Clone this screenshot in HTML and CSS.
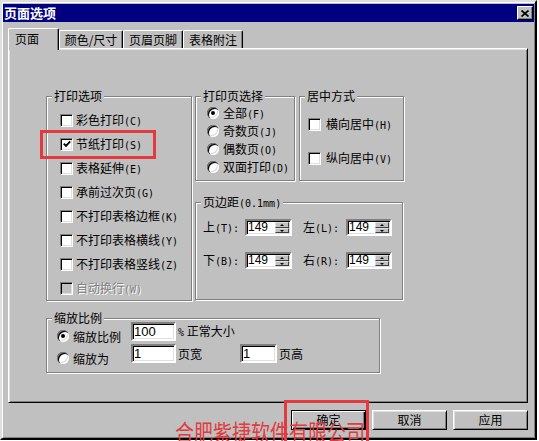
FILE: index.html
```html
<!DOCTYPE html>
<html lang="zh-CN">
<head>
<meta charset="utf-8">
<title>页面选项</title>
<link rel="stylesheet" href="styles.css">
</head>
<body>
<div class="window">
  <div class="titlebar">
    <span class="title">页面选项</span>
    <span class="close-btn"><svg width="8" height="7" viewBox="0 0 8 7"><path d="M0.5 0.5 L7.5 6.5 M7.5 0.5 L0.5 6.5"/></svg></span>
  </div>

  <div class="tabs">
    <div class="tab active">页面</div>
    <div class="tab w64">颜色/尺寸</div>
    <div class="tab w60">页眉页脚</div>
    <div class="tab w60">表格附注</div>
  </div>

  <div class="panel">
    <div class="top-row">
      <div class="group g-print">
        <span class="legend">打印选项</span>
        <div class="opt"><span class="cb"></span><span class="lbl">彩色打印<span class="acc">(C)</span></span></div>
        <div class="opt"><span class="cb"><svg width="8" height="8" viewBox="0 0 8 8"><path d="M0.8 3.6 L3 5.8 L7.2 1.4"/></svg></span><span class="lbl">节纸打印<span class="acc">(S)</span></span></div>
        <div class="opt"><span class="cb"></span><span class="lbl">表格延伸<span class="acc">(E)</span></span></div>
        <div class="opt"><span class="cb"></span><span class="lbl">承前过次页<span class="acc">(G)</span></span></div>
        <div class="opt"><span class="cb"></span><span class="lbl">不打印表格边框<span class="acc">(K)</span></span></div>
        <div class="opt"><span class="cb"></span><span class="lbl">不打印表格横线<span class="acc">(Y)</span></span></div>
        <div class="opt"><span class="cb"></span><span class="lbl">不打印表格竖线<span class="acc">(Z)</span></span></div>
        <div class="opt disabled"><span class="cb"></span><span class="lbl">自动换行<span class="acc">(W)</span></span></div>
      </div>

      <div class="right-col">
        <div class="right-top">
          <div class="group g-pages">
            <span class="legend">打印页选择</span>
            <div class="ropt"><span class="radio on"></span><span class="lbl">全部<span class="acc">(F)</span></span></div>
            <div class="ropt"><span class="radio"></span><span class="lbl">奇数页<span class="acc">(J)</span></span></div>
            <div class="ropt"><span class="radio"></span><span class="lbl">偶数页<span class="acc">(O)</span></span></div>
            <div class="ropt"><span class="radio"></span><span class="lbl">双面打印<span class="acc">(D)</span></span></div>
          </div>
          <div class="group g-center">
            <span class="legend">居中方式</span>
            <div class="copt"><span class="cb"></span><span class="lbl">横向居中<span class="acc">(H)</span></span></div>
            <div class="copt second"><span class="cb"></span><span class="lbl">纵向居中<span class="acc">(V)</span></span></div>
          </div>
        </div>

        <div class="group g-margin">
          <span class="legend">页边距<span class="acc">(0.1mm)</span></span>
          <div class="mrow">
            <span class="mlabel">上<span class="acc">(T):</span></span>
            <span class="field spin w47"><span class="val">149</span><span class="spinner"><span class="sb up"></span><span class="sb down"></span></span></span>
            <span class="mlabel second">左<span class="acc">(L):</span></span>
            <span class="field spin w46"><span class="val">149</span><span class="spinner"><span class="sb up"></span><span class="sb down"></span></span></span>
          </div>
          <div class="mrow row2">
            <span class="mlabel">下<span class="acc">(B):</span></span>
            <span class="field spin w47"><span class="val">149</span><span class="spinner"><span class="sb up"></span><span class="sb down"></span></span></span>
            <span class="mlabel second">右<span class="acc">(R):</span></span>
            <span class="field spin w46"><span class="val">149</span><span class="spinner"><span class="sb up"></span><span class="sb down"></span></span></span>
          </div>
        </div>
      </div>
    </div>

    <div class="group g-scale">
      <span class="legend">缩放比例</span>
      <div class="srow">
        <span class="rlabel"><span class="radio on"></span><span class="lbl">缩放比例</span></span>
        <span class="field sfield w45"><span class="val">100</span></span>
        <span class="after"><span class="acc">%</span> 正常大小</span>
      </div>
      <div class="srow row2">
        <span class="rlabel"><span class="radio"></span><span class="lbl">缩放为</span></span>
        <span class="field sfield w45"><span class="val">1</span></span>
        <span class="after wide">页宽</span>
        <span class="field sfield w37"><span class="val">1</span></span>
        <span class="after">页高</span>
      </div>
    </div>
  </div>

  <div class="buttons">
    <span class="btn default">确定</span>
    <span class="btn">取消</span>
    <span class="btn">应用</span>
  </div>

  <div class="mark mark-check"></div>
  <div class="mark mark-ok"></div>
  <div class="watermark">合肥紫捷软件有限公司</div>
</div>
</body>
</html>
```

FILE: styles.css
```css
* { box-sizing: border-box; }

html, body {
  margin: 0;
  padding: 0;
}

body {
  width: 539px;
  height: 441px;
  overflow: hidden;
  background: #ffffff;
  font-family: "Noto Sans CJK SC", "Noto Sans", sans-serif;
  font-size: 12px;
  color: #000;
}

.window {
  position: relative;
  width: 537px;
  height: 440px;
  background: #c0c0c0;
  border: 2px solid;
  border-color: #dfdfdf #000 #000 #dfdfdf;
  box-shadow: inset 1px 1px 0 #fff, inset -1px -1px 0 #808080;
  padding: 2px 1px 0 1px;
}

/* title bar */
.titlebar {
  height: 18px;
  background: #000080;
  display: flex;
  align-items: center;
  justify-content: space-between;
  padding-left: 1px;
}

.title {
  color: #fff;
  font-weight: bold;
  font-size: 13px;
  line-height: 16px;
}

.close-btn {
  width: 16px;
  height: 14px;
  margin-right: 1px;
  background: #c0c0c0;
  border: 1px solid;
  border-color: #fff #000 #000 #fff;
  box-shadow: inset -1px -1px 0 #808080;
  display: flex;
  align-items: center;
  justify-content: center;
}

.close-btn svg path {
  stroke: #000;
  stroke-width: 1.7;
  fill: none;
}

/* tabs */
.tabs {
  position: relative;
  z-index: 2;
  display: flex;
  align-items: flex-end;
  height: 20px;
  margin-top: 6px;
  padding-left: 5px;
}

.tab {
  height: 18px;
  border-top: 1px solid #fff;
  border-left: 1px solid #fff;
  border-right: 1px solid #000;
  box-shadow: inset -1px 0 0 #808080;
  border-radius: 2px 2px 0 0;
  background: #c0c0c0;
  line-height: 17px;
  text-align: center;
  white-space: nowrap;
}

.tab.active {
  width: 51px;
  height: 22px;
  margin-bottom: -2px;
  text-align: left;
  padding-left: 6px;
  padding-top: 1px;
}

.tab.w64 { width: 64px; }
.tab.w60 { width: 60px; }

/* panel */
.panel {
  margin-left: 5px;
  width: 520px;
  height: 355px;
  border: 1px solid;
  border-color: #fff #000 #000 #fff;
  box-shadow: inset 1px 1px 0 #dfdfdf, inset -1px -1px 0 #808080;
  padding: 47px 0 0 37px;
}

.top-row {
  display: flex;
  align-items: flex-start;
}

.right-col {
  margin-left: 3px;
  display: flex;
  flex-direction: column;
}

.right-top {
  display: flex;
  gap: 4px;
}

/* group boxes */
.group {
  position: relative;
  border: 1px solid #808080;
  box-shadow: inset 1px 1px 0 #fff, 1px 1px 0 #fff;
}

.legend {
  position: absolute;
  top: -7px;
  left: 5px;
  padding: 0 2px;
  background: #c0c0c0;
  line-height: 12px;
  white-space: nowrap;
}

.g-print {
  width: 146px;
  height: 205px;
  padding: 11px 0 0 13px;
}

.g-pages {
  width: 100px;
  height: 85px;
  padding: 7px 0 0 11px;
}

.g-center {
  width: 105px;
  height: 85px;
  padding: 15px 0 0 8px;
}

.g-margin {
  width: 208px;
  height: 98px;
  margin-top: 21px;
  padding: 16px 0 0 7px;
}

.g-scale {
  width: 334px;
  height: 55px;
  margin-top: 17px;
  padding: 3px 0 0 10px;
}

/* text bits */
.lbl {
  line-height: 13px;
  white-space: nowrap;
}

.acc {
  font-family: "DejaVu Sans Mono", "Liberation Mono", monospace;
  font-size: 10px;
}

/* checkboxes */
.opt {
  display: flex;
  align-items: center;
  gap: 3px;
  height: 24px;
}

.copt {
  display: flex;
  align-items: center;
  gap: 5px;
  height: 24px;
}

.copt.second { margin-top: 10px; }

.cb {
  flex: none;
  width: 13px;
  height: 13px;
  background: #fff;
  border: 1px solid;
  border-color: #808080 #fff #fff #808080;
  box-shadow: inset 1px 1px 0 #000, inset -1px -1px 0 #dfdfdf;
  display: flex;
  align-items: center;
  justify-content: center;
}

.cb svg path {
  stroke: #000;
  stroke-width: 1.9;
  fill: none;
}

.disabled .cb { background: #c0c0c0; }

.disabled .lbl {
  color: #808080;
  text-shadow: 1px 1px 0 #fff;
}

/* radios */
.ropt {
  display: flex;
  align-items: center;
  gap: 4px;
  height: 18px;
}

.radio {
  flex: none;
  position: relative;
  width: 12px;
  height: 12px;
  border-radius: 50%;
  background: #fff;
  box-shadow:
    inset 1px 1px 0 #808080,
    inset 2px 2px 0 #000,
    inset -1px -1px 0 #fff,
    inset -2px -2px 0 #dfdfdf;
}

.radio.on::after {
  content: "";
  position: absolute;
  left: 4px;
  top: 4px;
  width: 4px;
  height: 4px;
  border-radius: 50%;
  background: #000;
}

/* edit fields */
.field {
  display: flex;
  align-items: stretch;
  background: #fff;
  border: 2px solid;
  border-color: #808080 #fff #fff #808080;
  box-shadow: inset 1px 1px 0 #000, inset -1px -1px 0 #dfdfdf;
}

.val {
  flex: 1;
  padding-left: 1px;
  font-family: "Liberation Sans", Arial, sans-serif;
}

/* margin rows */
.mrow {
  display: flex;
  align-items: center;
  height: 17px;
}

.mrow.row2 { margin-top: 16px; }

.mlabel {
  width: 42px;
  white-space: nowrap;
  line-height: 13px;
}

.mlabel.second {
  width: 43px;
  margin-left: 11px;
}

.spin { height: 17px; }
.spin .val { font-size: 12px; line-height: 13px; }
.w47 { width: 47px; }
.w46 { width: 46px; }
.w45 { width: 45px; }
.w37 { width: 37px; }

.spinner {
  width: 15px;
  display: flex;
  flex-direction: column;
  padding: 1px 1px 1px 0;
}

.sb {
  flex: 1;
  position: relative;
  background: #c0c0c0;
  border-top: 1px solid #dfdfdf;
  border-left: 1px solid #dfdfdf;
  border-right: 1px solid #404040;
  border-bottom: 1px solid #404040;
}

.sb::after {
  content: "";
  position: absolute;
  left: 4px;
  width: 0;
  height: 0;
  border-left: 2px solid transparent;
  border-right: 2px solid transparent;
}

.sb.up::after {
  top: 1px;
  border-bottom: 2px solid #000;
}

.sb.down::after {
  top: 1px;
  border-top: 2px solid #000;
}

/* scale rows */
.srow {
  display: flex;
  align-items: center;
  height: 19px;
}

.srow.row2 { margin-top: 3px; }

.rlabel {
  width: 74px;
  display: flex;
  align-items: center;
  gap: 4px;
  padding-top: 9px;
}

.sfield { height: 19px; }
.sfield .val { font-size: 13px; line-height: 15px; }

.after {
  margin-left: 2px;
  white-space: nowrap;
  line-height: 13px;
}

.after.wide { width: 62px; }

/* buttons */
.buttons {
  display: flex;
  justify-content: flex-end;
  gap: 6px;
  margin-top: 7px;
  padding-right: 6px;
}

.btn {
  width: 75px;
  height: 20px;
  border: 1px solid;
  border-color: #fff #000 #000 #fff;
  box-shadow: inset 1px 1px 0 #dfdfdf, inset -1px -1px 0 #808080;
  text-align: center;
  line-height: 17px;
}

.btn.default {
  border-color: #000;
  box-shadow: inset 1px 1px 0 #fff, inset -1px -1px 0 #000, inset -2px -2px 0 #808080;
}

/* annotations drawn over the dialog */
.mark {
  position: absolute;
  z-index: 5;
  border: 3px solid #e23a3e;
}

.mark-check {
  left: 38px;
  top: 128px;
  width: 116px;
  height: 29px;
}

.mark-ok {
  left: 282px;
  top: 398px;
  width: 85px;
  height: 60px;
}

.watermark {
  position: absolute;
  z-index: 6;
  left: 173px;
  top: 417px;
  font-size: 19px;
  line-height: 19px;
  color: #e23a3e;
  white-space: nowrap;
  transform: scaleY(1.2);
  transform-origin: top left;
}
```
